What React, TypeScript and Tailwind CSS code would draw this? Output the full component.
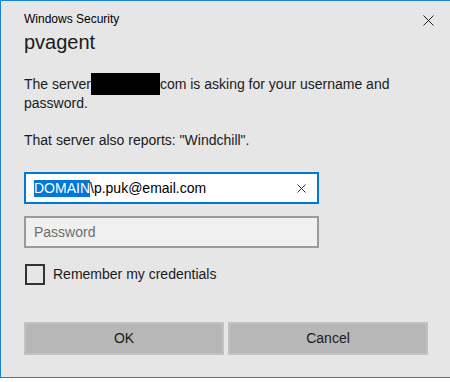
import React from 'react';

const FONT = "font-['Liberation_Sans',Arial,sans-serif]";

export default function App() {
    return (
        <div className={`w-[450px] h-[382px] overflow-hidden bg-white ${FONT} text-black`}>
            <div className="w-[470px] h-[378px] bg-[#e6e6e6] border-l border-t border-b border-[#1883d7] pl-[23px] pt-[10px]">
                {/* Title row */}
                <div className="flex items-center justify-between w-[410px] h-[16px]">
                    <span className="text-[12px] leading-[16px]">Windows Security</span>
                    <svg width="11" height="11" viewBox="0 0 11 11" className="mt-[3px]">
                        <path d="M0.5 0.5 L10.5 10.5 M10.5 0.5 L0.5 10.5" stroke="#222" strokeWidth="1" fill="none" />
                    </svg>
                </div>

                <div className="mt-[3px] text-[20px] leading-[24px] text-[#1a1a1a]">pvagent</div>

                {/* Message, server name blacked out */}
                <div className="mt-[21px] text-[14px] leading-[19px] text-[#1a1a1a]">
                    <div className="flex items-start whitespace-nowrap">
                        <span>The server</span>
                        <span className="relative w-[69px] h-[19px]">
                            <span className="absolute left-0 right-0 -top-[2px] -bottom-[1px] bg-black" />
                        </span>
                        <span>com is asking for your username and</span>
                    </div>
                    <div>password.</div>
                </div>

                <p className="mt-[18px] text-[14px] leading-[19px] text-[#1a1a1a]">
                    That server also reports: "Windchill".
                </p>

                {/* Username */}
                <div className="mt-[22px] w-[295px] h-[32px] bg-white border-2 border-[#0078d7] flex items-center pl-[8px] pr-[11px]">
                    <div className="flex-1 text-[14px] leading-[17px] whitespace-nowrap">
                        <span className="inline-block bg-[#0078d7] text-white">DOMAIN</span>
                        <span>\p.puk@email.com</span>
                    </div>
                    <svg width="9" height="9" viewBox="0 0 9 9">
                        <path d="M0.5 0.5 L8.5 8.5 M8.5 0.5 L0.5 8.5" stroke="#333" strokeWidth="1" fill="none" />
                    </svg>
                </div>

                {/* Password */}
                <div className="mt-[12px] w-[295px] h-[32px] bg-[#f0f0f0] border-2 border-[#9a9a9a] flex items-center pl-[8px]">
                    <span className="text-[14px] leading-[17px] text-[#6d6d6d]">Password</span>
                </div>

                {/* Remember */}
                <div className="mt-[16px] flex items-center h-[21px]">
                    <div className="ml-[1px] w-[20px] h-[21px] border-2 border-[#333] bg-[#e6e6e6]" />
                    <span className="ml-[8px] text-[14px] leading-[21px] text-[#1a1a1a]">Remember my credentials</span>
                </div>

                {/* Buttons */}
                <div className="mt-[37px] flex gap-[4px]">
                    <button className="w-[200px] h-[33px] bg-[#b7b7b7] border-2 border-[#c2c2c2] text-[14px] text-[#1a1a1a]">
                        OK
                    </button>
                    <button className="w-[200px] h-[33px] bg-[#b7b7b7] border-2 border-[#c2c2c2] text-[14px] text-[#1a1a1a]">
                        Cancel
                    </button>
                </div>
            </div>
        </div>
    );
}
